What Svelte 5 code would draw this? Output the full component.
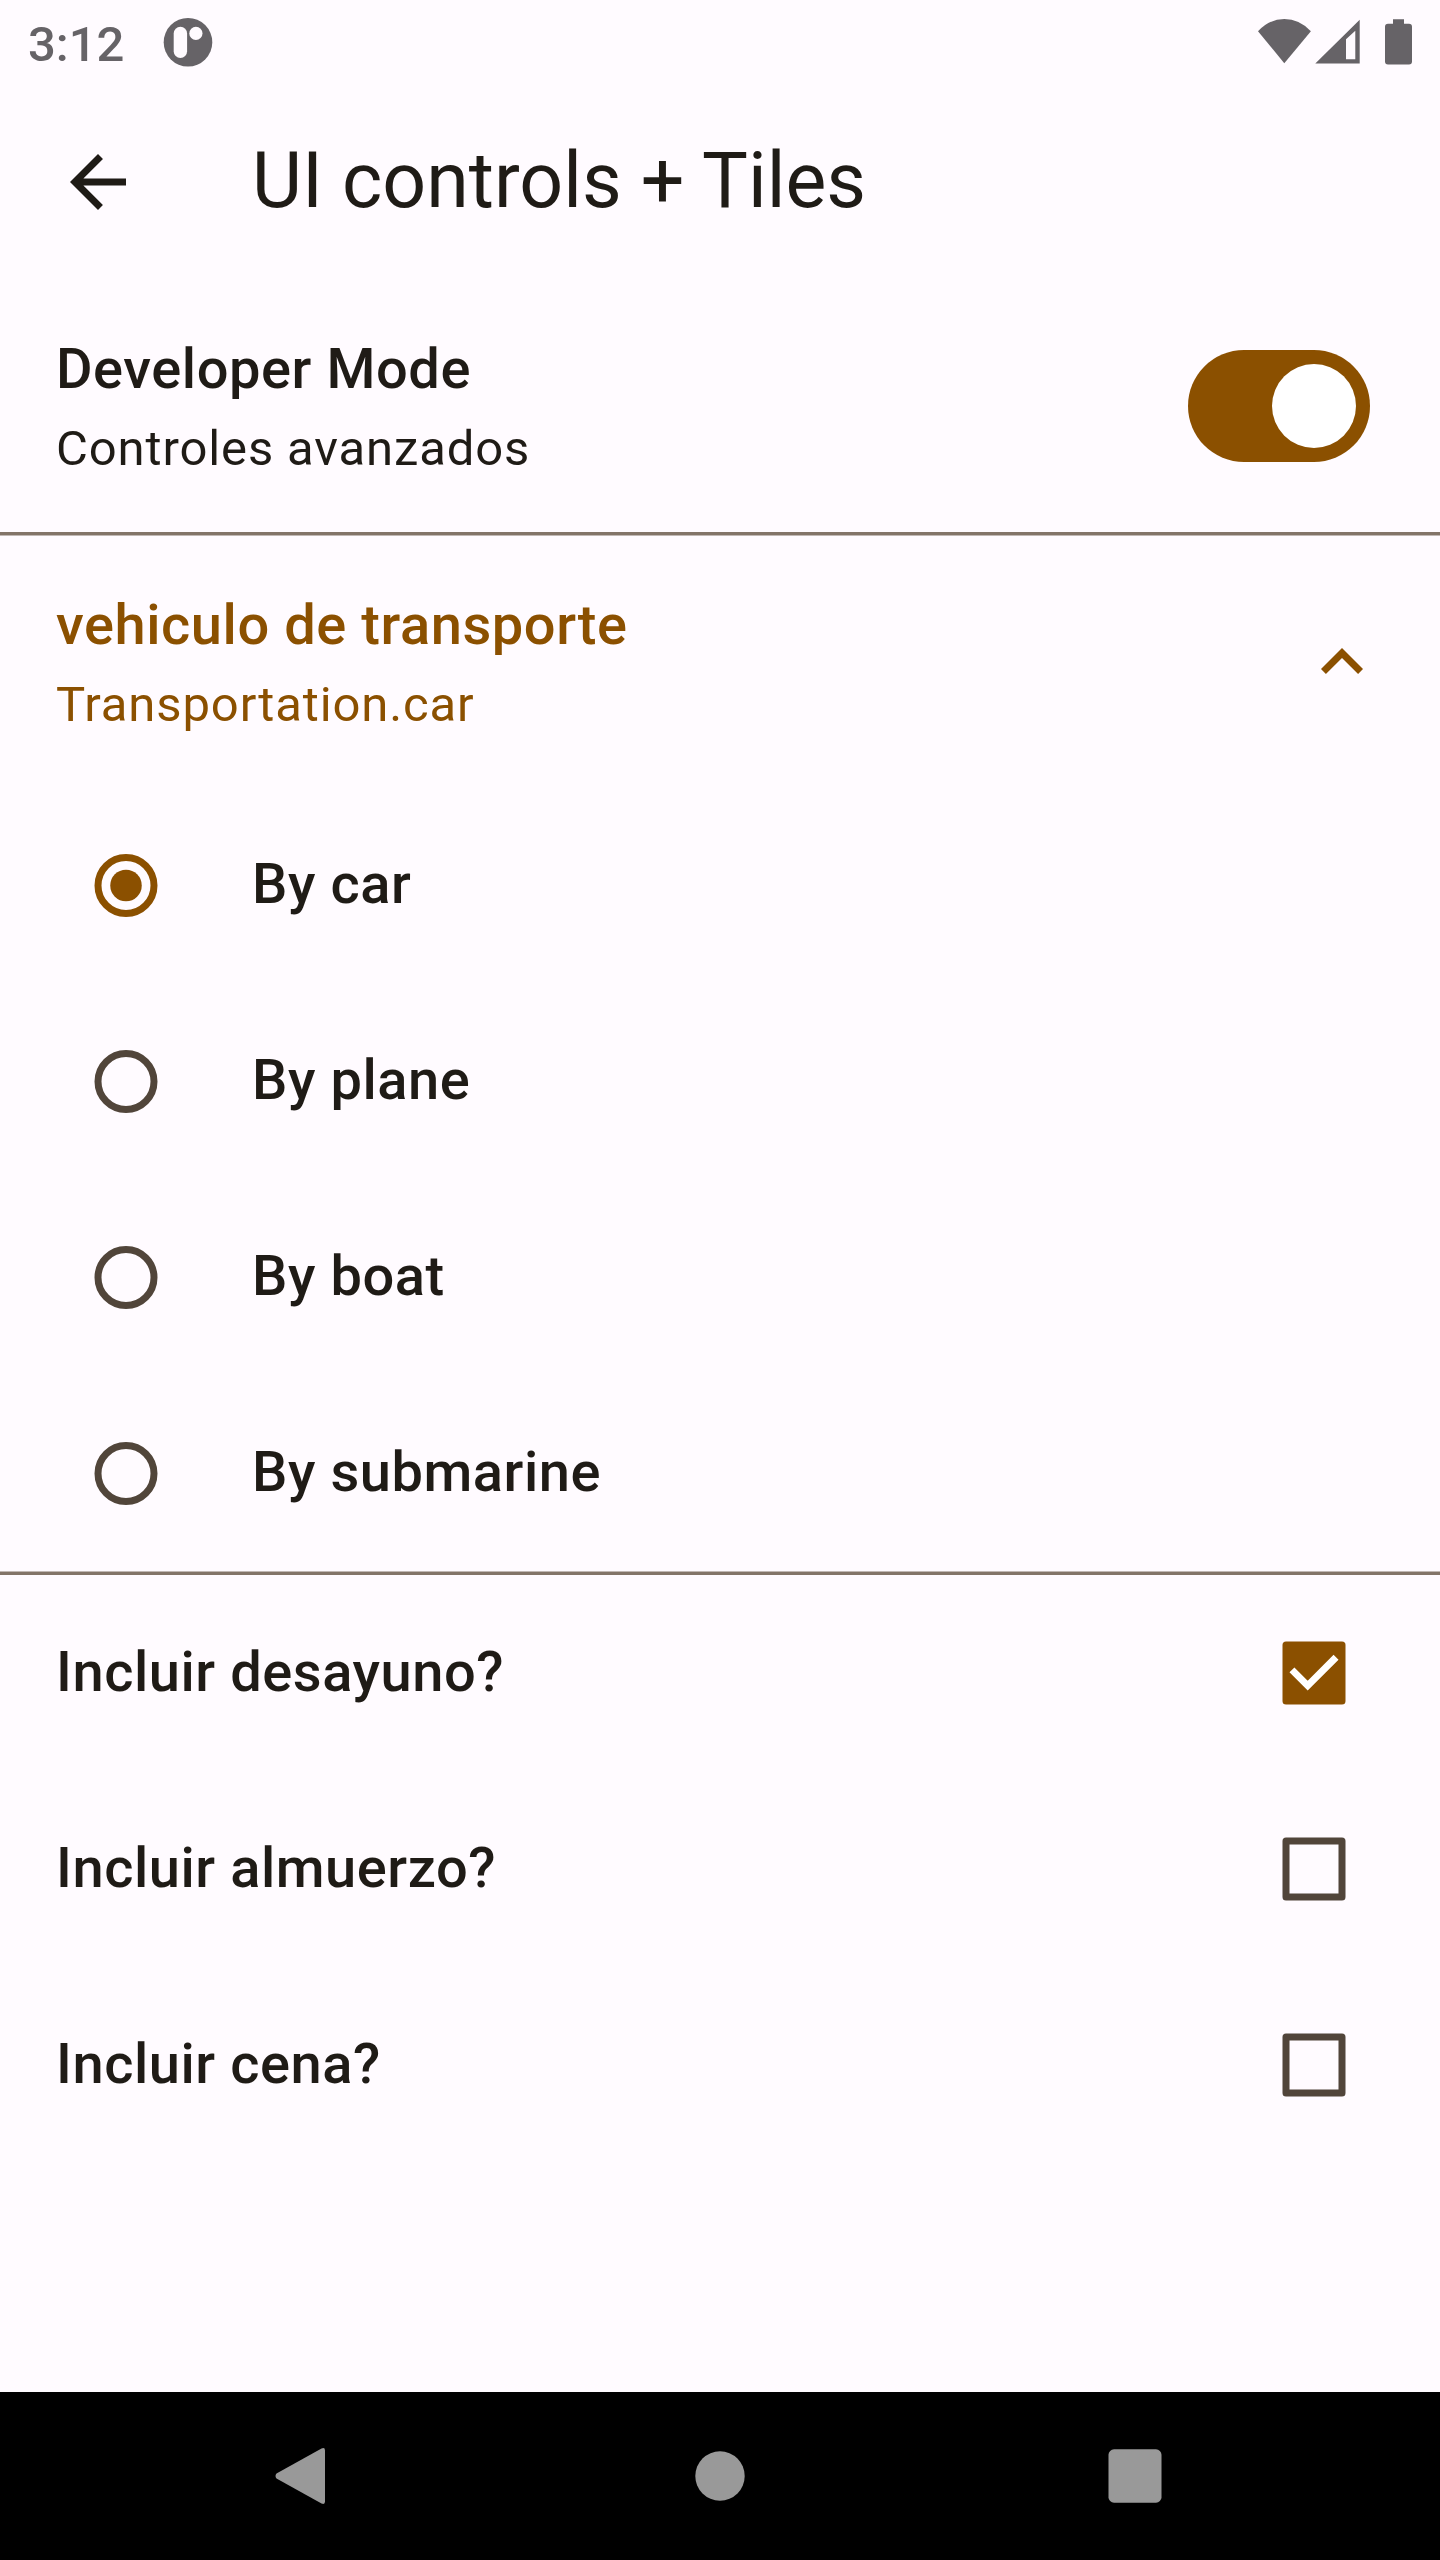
<script>
  let developer = $state(true);
  let transport = $state('car');
  let expanded = $state(true);

  const transports = [
    { id: 'car', label: 'By car' },
    { id: 'plane', label: 'By plane' },
    { id: 'boat', label: 'By boat' },
    { id: 'submarine', label: 'By submarine' }
  ];

  let meals = $state([
    { label: 'Incluir desayuno?', checked: true },
    { label: 'Incluir almuerzo?', checked: false },
    { label: 'Incluir cena?', checked: false }
  ]);
</script>

<div class="screen">
  <header class="status">
    <span class="clock">3:12</span>
    <svg class="notice" width="50" height="50" viewBox="0 0 50 50">
      <circle cx="25" cy="25.300" r="24.3" />
      <rect class="hole" x="10.7" y="9.7" width="13.4" height="31.3" rx="6.7" />
      <circle class="hole" cx="32.9" cy="16.4" r="6.6" />
    </svg>
    <svg class="signals" width="160" height="50" viewBox="0 0 160 50">
      <path d="M6 14.3Q17.500 2 32.300 2Q47.500 2 58.900 14.300L32.300 46.200Z" />
      <path fill-rule="evenodd" d="M63.300 46.500L107.700 2.700V46.500ZM94 22.300V42.300H103.300V13.700Z" />
      <path d="M141 2.300H152V6.700H157Q160 6.700 160 9.700V44.500Q160 47.500 157 47.500H136Q133 47.500 133 44.500V9.700Q133 6.700 136 6.700H141Z" />
    </svg>
  </header>

  <div class="appbar">
    <svg width="84" height="84" viewBox="0 0 24 24">
      <path d="M20 11H7.830l5.590-5.590L12 4l-8 8 8 8 1.410-1.410L7.830 13H20z" />
    </svg>
    <h1>UI controls + Tiles</h1>
  </div>

  <main>
    <div class="tile two-line" role="switch" aria-checked={developer} tabindex="-1"
      onclick={() => (developer = !developer)} onkeydown={() => {}}>
      <div class="text">
        <div class="title">Developer Mode</div>
        <div class="subtitle">Controles avanzados</div>
      </div>
      <span class="switch" class:on={developer}><span class="thumb"></span></span>
    </div>

    <div class="divider"></div>

    <div class="tile two-line accent" role="button" tabindex="-1"
      onclick={() => (expanded = !expanded)} onkeydown={() => {}}>
      <div class="text">
        <div class="title">vehiculo de transporte</div>
        <div class="subtitle">Transportation.{transport}</div>
      </div>
      <svg class="chevron" class:closed={!expanded} width="84" height="84" viewBox="0 0 24 24">
        <path d="M12 8l-6 6 1.410 1.410L12 10.830l4.590 4.580L18 14z" />
      </svg>
    </div>

    {#if expanded}
      {#each transports as t (t.id)}
        <div class="tile radio-tile" role="radio" aria-checked={transport === t.id} tabindex="-1"
          onclick={() => (transport = t.id)} onkeydown={() => {}}>
          <svg class="radio" class:selected={transport === t.id} width="64" height="63" viewBox="0 0 64 63">
            <circle class="ring" cx="32" cy="31.500" r="28" />
            {#if transport === t.id}<circle class="dot" cx="32" cy="31.500" r="15.750" />{/if}
          </svg>
          <div class="title">{t.label}</div>
        </div>
      {/each}
    {/if}

    <div class="divider lower"></div>

    {#each meals as m}
      <div class="tile check-tile" role="checkbox" aria-checked={m.checked} tabindex="-1"
        onclick={() => (m.checked = !m.checked)} onkeydown={() => {}}>
        <div class="title">{m.label}</div>
        <svg class="check" width="64" height="64" viewBox="-0.500 -0.500 64 64">
          {#if m.checked}
            <rect class="fill" width="63" height="63" rx="3.500" />
            <path d="M9.450 28.350L25.200 44.100L53.550 15.750" />
          {:else}
            <rect class="box" x="3.500" y="3.500" width="56" height="56" />
          {/if}
        </svg>
      </div>
    {/each}
  </main>

  <nav>
    <svg width="168" height="168" viewBox="0 0 168 168">
      <path d="M55.500 81.500L100.500 56.500Q104 55 104 58.500V109.500Q104 113 100.500 111.500L55.500 86.500Q53.500 84 55.500 81.500Z" />
    </svg>
    <svg width="168" height="168" viewBox="0 0 168 168"><circle cx="84" cy="84" r="24.700" /></svg>
    <svg width="168" height="168" viewBox="0 0 168 168"><rect x="57.500" y="57.300" width="53" height="53.400" rx="5.500" /></svg>
  </nav>
</div>

<style>
  :global(body) {
    margin: 0;
    background: #fffbff;
  }

  .screen {
    width: 1440px;
    height: 2560px;
    display: flex;
    flex-direction: column;
    background: #fffbff;
    color: #1f1b16;
    font-family: Roboto, sans-serif;
    overflow: hidden;
  }

  svg {
    display: block;
    flex: none;
  }

  .status {
    height: 84px;
    display: flex;
    align-items: center;
    box-sizing: border-box;
    padding: 0 28px;
    color: #666367;
    fill: #666367;
  }

  .clock {
    width: 135.300px;
    font-size: 49px;
    font-weight: 500;
    line-height: 58px;
    padding-top: 5px;
    box-sizing: border-box;
  }

  .hole {
    fill: #fffbff;
  }

  .signals {
    margin-left: auto;
  }

  .appbar {
    height: 196px;
    display: flex;
    align-items: center;
    gap: 112px;
    padding-left: 56px;
    fill: #1f1b16;
  }

  h1 {
    margin: 0;
    padding-bottom: 2px;
    font-size: 77px;
    font-weight: 400;
    line-height: 98px;
  }

  main {
    flex: 1;
  }

  .tile {
    height: 196px;
    display: flex;
    align-items: center;
    justify-content: space-between;
    box-sizing: border-box;
    padding: 0 94px 0 56px;
  }

  .two-line {
    height: 252px;
    padding-right: 70px;
  }

  .two-line.accent {
    padding-right: 56px;
    color: #8b5000;
    fill: #8b5000;
  }

  .text {
    display: flex;
    flex-direction: column;
    gap: 6px;
  }

  .title {
    font-size: 56px;
    font-weight: 500;
    line-height: 80px;
    letter-spacing: 0.560px;
  }

  .subtitle {
    font-size: 49px;
    line-height: 68px;
    letter-spacing: 0.875px;
  }

  .switch {
    width: 182px;
    height: 112px;
    display: flex;
    align-items: center;
    box-sizing: border-box;
    padding: 0 14px;
    border-radius: 56px;
    background: #d6c3b5;
  }

  .switch.on {
    justify-content: flex-end;
    background: #8b5000;
  }

  .thumb {
    width: 84px;
    height: 84px;
    border-radius: 50%;
    background: #fff;
  }

  .chevron.closed {
    transform: rotate(180deg);
  }

  /* 3.5px rule: three solid pixels and a half-strength edge */
  .divider {
    height: 4px;
    margin-bottom: -0.500px;
    background: linear-gradient(to bottom, #837468 3px, #c1b8b4 3px);
  }

  .divider.lower {
    margin: -0.500px 0 0;
    background: linear-gradient(to top, #837468 3px, #c1b8b4 3px);
  }

  .radio-tile {
    justify-content: flex-start;
    gap: 94px;
    padding-left: 94px;
  }

  .radio-tile .title {
    padding-bottom: 3px;
  }

  .check-tile .title {
    padding-bottom: 2px;
  }

  .ring {
    fill: none;
    stroke: #51453a;
    stroke-width: 7;
  }

  .selected .ring {
    stroke: #8b5000;
  }

  .dot,
  .check .fill {
    fill: #8b5000;
  }

  .check path {
    fill: none;
    stroke: #fff;
    stroke-width: 7;
  }

  .box {
    fill: none;
    stroke: #51453a;
    stroke-width: 7;
    stroke-linejoin: round;
  }

  nav {
    height: 168px;
    display: flex;
    justify-content: center;
    gap: 247px;
    background: #000;
    fill: #999;
  }
</style>
